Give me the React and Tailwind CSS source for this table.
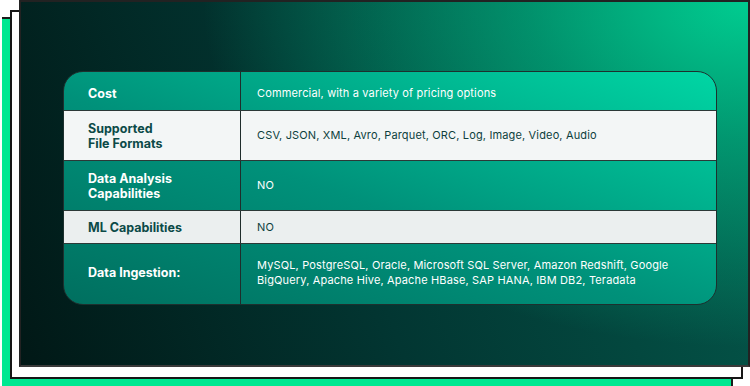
export default function App() {
  const rows = [
    { label: ["Cost"], value: "Commercial, with a variety of pricing options", light: "", h: "h-[38px]", pad: "pt-[5px]" },
    { label: ["Supported", "File Formats"], value: "CSV, JSON, XML, Avro, Parquet, ORC, Log, Image, Video, Audio", light: "bg-[#f3f6f6]", h: "h-[50px]", pad: "" },
    { label: ["Data Analysis", "Capabilities"], value: "NO", light: "", h: "h-[50px]", pad: "" },
    { label: ["ML Capabilities"], value: "NO", light: "bg-[#ebefef]", h: "h-[33px]", pad: "" },
    { label: ["Data Ingestion:"], value: "MySQL, PostgreSQL, Oracle, Microsoft SQL Server, Amazon Redshift, Google BigQuery, Apache Hive, Apache HBase, SAP HANA, IBM DB2, Teradata", light: "", h: "h-[61px]", pad: "pb-[3px]" },
  ];
  return (
    <div className="relative w-[750px] h-[386px] bg-white overflow-hidden" style={{ fontFamily: "Inter, 'Open Sans', sans-serif" }}>
      <div className="absolute left-[2px] top-[17px] w-[731px] h-[380px] bg-[#00e891] border-t-2 border-r-2 border-[#1c1c1c]" />
      <div className="absolute left-[10px] top-[10px] w-[733px] h-[369px] bg-white border-2 border-[#161616]" />
      <div className="relative ml-[19px] w-[731px] h-[367px] border-2 border-[#222] border-b-[#3a3a3a] pl-[42px] pt-[69px] bg-[radial-gradient(ellipse_75%_95%_at_100%_0%,rgba(0,204,144,1)_0%,rgba(0,204,144,0.55)_40%,rgba(0,204,144,0)_100%),linear-gradient(70deg,#011816_0%,#023632_45%,#045a4c_100%)]">
        <div className="w-[654px] rounded-[20px] overflow-hidden border border-[#1d302e] bg-[linear-gradient(to_top_right,#006f5f_0%,#00917a_45%,#00d6a4_100%)]">
          {rows.map((r, i) => (
            <div
              key={i}
              className={`grid grid-cols-[176px_1fr] ${r.h} ${i > 0 ? "border-t border-[#2b3937]" : ""} ${r.light}`}
            >
              <div className={`flex flex-col justify-center pl-[24px] ${r.pad} text-[12.5px] leading-[15px] font-bold ${r.light ? "text-[#0b4a47]" : "text-white"}`}>
                {r.label.map((l, j) => (
                  <span key={j}>{l}</span>
                ))}
              </div>
              <div className={`flex items-center border-l border-[#1f2d2b] pl-[16px] pr-[40px] ${r.pad} text-[11px] leading-[15px] tracking-[0.15px] ${r.light ? "text-[#0d3f3d]" : "text-white"}`}>
                <span>{r.value}</span>
              </div>
            </div>
          ))}
        </div>
      </div>
    </div>
  );
}
